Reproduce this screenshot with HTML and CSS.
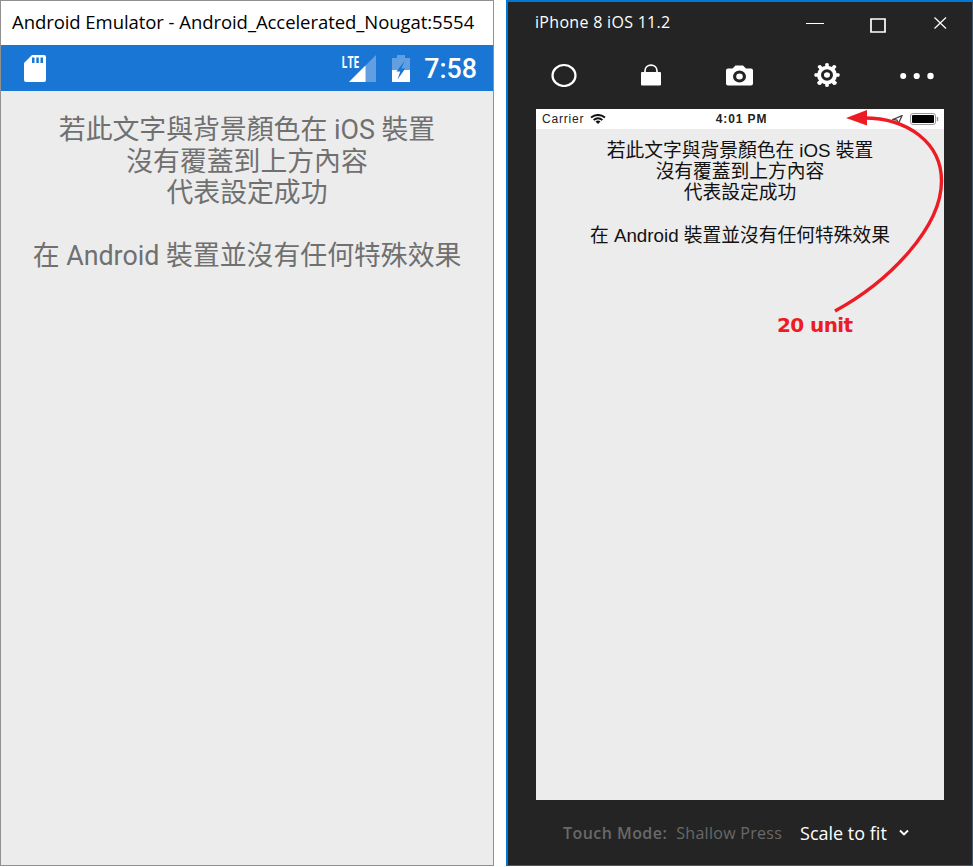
FILE: index.html
```html
<!DOCTYPE html>
<html lang="zh-Hant">
<head>
<meta charset="utf-8">
<title>Simulators</title>
<link rel="stylesheet" href="styles.css">
</head>
<body>
<main class="desktop">
  <section class="android">
    <header class="android-title"><span>Android Emulator - Android_Accelerated_Nougat:5554</span></header>
    <div class="android-status">
      <svg class="sd" width="22" height="27" viewBox="0 0 22 27"><path fill="#fff" fill-rule="evenodd" d="M8 0H20Q22 0 22 2V25Q22 27 20 27H2Q0 27 0 25V8ZM8 2.500V8H10.500V2.500ZM12.300 2.500V8H14.800V2.500ZM16.500 2.500V8H19V2.500Z"/></svg>
      <div class="signal">
        <span class="lte">LTE</span>
        <svg width="27" height="27" viewBox="0 0 27 27"><path fill="#619fe1" d="M27 0V27H0Z"/><path fill="#fff" d="M16.500 10.500V27H0Z"/></svg>
      </div>
      <svg class="battery" width="18" height="27" viewBox="0 0 18 27"><path fill="#619fe1" d="M5 0H13V3H18V15H0V3H5Z"/><path fill="#fff" d="M0 15H18V27H0Z"/><path fill="#1976d4" d="M12.500 6L4.500 16.500H8.200L5.500 24.500L13.300 13.500H9.500Z"/></svg>
      <span class="clock">7:58</span>
    </div>
    <div class="android-body">
      <p>若此文字與背景顏色在 iOS 裝置<br>沒有覆蓋到上方內容<br>代表設定成功</p>
      <p>在 Android 裝置並沒有任何特殊效果</p>
    </div>
  </section>

  <section class="iphone">
    <header class="iphone-title">
      <span class="name">iPhone 8 iOS 11.2</span>
      <svg class="min" width="18" height="16"><path d="M0 9.500H18" stroke="#fff"/></svg>
      <svg class="max" width="16" height="16"><path d="M1 1H15V14H1Z" fill="none" stroke="#fff" stroke-width="1.700"/></svg>
      <svg class="close" width="13" height="12"><path d="M.5 .5L12 11.500M12 .5L.5 11.500" stroke="#fff" stroke-width="1.200"/></svg>
    </header>
    <nav class="tools">
      <svg width="26" height="24" viewBox="0 0 26 24"><ellipse cx="13" cy="12.500" rx="11.500" ry="10.500" fill="none" stroke="#fff" stroke-width="2.200"/></svg>
      <svg class="lock" width="20" height="24" viewBox="0 0 20 24"><path d="M4 10V8C4 .2 16 .2 16 8V10" fill="none" stroke="#fff" stroke-width="1.700"/><rect y="9" width="20" height="13.500" rx="1" fill="#fff"/></svg>
      <svg class="camera" width="27" height="24" viewBox="0 0 27 24"><path fill="#fff" d="M2 5.500H6.500L9.500 2.500H17L20 5.500H25Q27 5.500 27 7.500V20.500Q27 22.500 25 22.500H2Q0 22.500 0 20.500V7.500Q0 5.500 2 5.500Z"/><ellipse cx="13.500" cy="13.500" rx="4.900" ry="4.500" fill="none" stroke="#242424" stroke-width="3.200"/></svg>
      <svg class="gear" width="26" height="24" viewBox="0 0 26 24"><g fill="#fff"><ellipse cx="13" cy="12" rx="10" ry="9.200"/><path d="M11.200 .8Q13 -.6 14.800 .8V23.200Q13 24.600 11.200 23.200ZM1 10.300H25Q26.500 12 25 13.700H1Q-.5 12 1 10.300Z"/><path d="M3.500 4Q4 1.700 6.500 2L23 19.500Q22.500 22.300 19.500 22ZM22.500 4Q22 1.700 19.500 2L3 19.500Q3.500 22.300 6.500 22Z"/></g><ellipse cx="13" cy="12" rx="4.500" ry="4.200" fill="#fff" stroke="#242424" stroke-width="3"/></svg>
      <svg width="34" height="24" viewBox="0 0 34 24"><g fill="#fff"><circle cx="3.200" cy="13" r="3"/><circle cx="16.700" cy="13" r="3.100"/><circle cx="30.500" cy="13" r="3.200"/></g></svg>
    </nav>
    <div class="screen">
      <div class="ios-status">
        <div class="carrier"><span>Carrier</span>
          <svg width="16" height="10" viewBox="0 0 16 10"><g fill="none" stroke="#111" stroke-width="2"><path d="M1 3.500Q8 -1.500 15 3.500"/><path d="M3.600 6Q8 2.500 12.400 6"/></g><path fill="#111" d="M5.500 7.500Q8 5.700 10.500 7.500L8 10Z"/></svg>
        </div>
        <span class="time">4:01 PM</span>
        <div class="right">
          <svg width="11" height="9" viewBox="0 0 11 9"><path d="M10 .7L1 4.500L5 5L6.500 8.500Z" fill="none" stroke="#444" stroke-width="1.300"/></svg>
          <svg width="29" height="12" viewBox="0 0 29 12"><rect x=".5" y=".5" width="25" height="11" rx="2.500" fill="#fff" stroke="#999"/><rect x="2" y="2" width="22" height="8" rx="1" fill="#000"/><path d="M27.500 4V8" stroke="#999" stroke-width="1.500"/></svg>
        </div>
      </div>
      <div class="ios-body">
        <p>若此文字與背景顏色在 iOS 裝置<br>沒有覆蓋到上方內容<br>代表設定成功</p>
        <p>在 Android 裝置並沒有任何特殊效果</p>
      </div>
    </div>
    <footer class="iphone-footer">
      <b>Touch Mode:</b>
      <span class="press">Shallow Press</span>
      <span class="scale">Scale to fit</span>
      <svg width="10" height="8"><path d="M1 1.500L5 5.500L9 1.500" fill="none" stroke="#fff" stroke-width="1.900"/></svg>
    </footer>
    <svg class="arrow" width="110" height="210" viewBox="840 105 110 210"><path d="M835 311C890 281 941.500 227 941.500 181C941.500 143 908 118 864 118" fill="none" stroke="#ed1c24" stroke-width="3.400"/><path fill="#ed1c24" d="M846 118L867 110V125.500Z"/></svg>
    <span class="note">20 unit</span>
  </section>
</main>
</body>
</html>
```
FILE: styles.css
```css
* { box-sizing: border-box; }
body { margin: 0; background: #fff; overflow: hidden; }
p { margin: 0; }
svg { display: block; flex: none; }
.desktop { display: flex; width: 973px; height: 867px; gap: 12px; white-space: nowrap; }

.android { width: 494px; height: 866px; border: 1px solid #919191; background: #ececec; }
.android-title { height: 44px; padding: 0 0 3px 11px; background: #fff; display: flex; align-items: center; font: 18.500px "Open Sans", sans-serif; letter-spacing: -.06px; color: #000; }
.android-status { height: 46px; background: #1976d4; display: flex; align-items: center; padding: 0 16px 0 24px; color: #fff; }
.android-status .sd { margin-left: -1px; }
.signal { display: flex; margin-left: auto; margin-right: 16px; }
.lte { font: 700 16px/14px "Open Sans", sans-serif; transform: scaleX(.65); transform-origin: right top; margin-right: -10px; position: relative; z-index: 1; }
.clock { font: 500 26.800px/46px Roboto, sans-serif; margin-left: 14px; padding-top: 2px; }
.android-body { padding-top: 24px; text-align: center; font: 26.850px/31.500px Roboto, "Noto Sans CJK TC", sans-serif; color: #707070; }
.android-body p + p { margin-top: 31.500px; }

.iphone { position: relative; width: 467px; height: 866px; background: #242424; border: solid #0078d7; border-width: 2px 1px 0 2px; border-right-color: #405a73; border-bottom: 1px solid #555; }
.iphone-title { height: 42px; padding: 0 25px 2px 27px; display: flex; align-items: center; color: #fff; font: 16px "Open Sans", sans-serif; letter-spacing: .3px; }
.iphone-title .min { margin-left: auto; margin-right: 46px; }
.iphone-title .max { margin-top: 8px; margin-right: 48px; }
.iphone-title .close { margin-top: 1px; }
.tools { height: 65px; padding: 0 38px 3px 43px; display: flex; align-items: center; justify-content: space-between; }
.tools .lock { margin-left: 4px; }
.tools .camera { margin-left: 4px; }
.tools .gear { margin-left: 1px; }
.screen { width: 408px; height: 691px; margin-left: 28px; background: #ececec; }
.ios-status { height: 20px; background: #fff; display: grid; grid-template-columns: 1fr auto 1fr; align-items: center; padding: 0 5px 0 6px; color: #222; font: 12px "Liberation Sans", sans-serif; }
.carrier { display: flex; align-items: center; gap: 6px; letter-spacing: .8px; }
.time { font-weight: 700; letter-spacing: .9px; margin-left: 2px; }
.right { display: flex; justify-content: flex-end; align-items: center; gap: 7px; }
.ios-body { padding-top: 11px; text-align: center; font: 18.750px/21.200px "Liberation Sans", "Noto Sans CJK TC", sans-serif; color: #111; }
.ios-body p + p { margin-top: 21.200px; }
.iphone-footer { height: 64px; padding-top: 2px; display: flex; align-items: center; padding-left: 55px; color: #696969; font: 16px "Open Sans", sans-serif; }
.iphone-footer b { font-weight: 600; letter-spacing: .45px; margin-right: 9px; }
.iphone-footer .press { letter-spacing: .28px; }
.iphone-footer .scale { color: #fff; font-size: 18px; line-height: 24px; padding-bottom: 1px; margin-left: 18px; margin-right: 12px; }
.arrow { position: absolute; left: 332px; top: 103px; overflow: visible; }
.note { position: absolute; left: 269px; top: 310px; font: 700 20px/26px "DejaVu Sans", sans-serif; letter-spacing: -.6px; color: #ed1c24; }
```
